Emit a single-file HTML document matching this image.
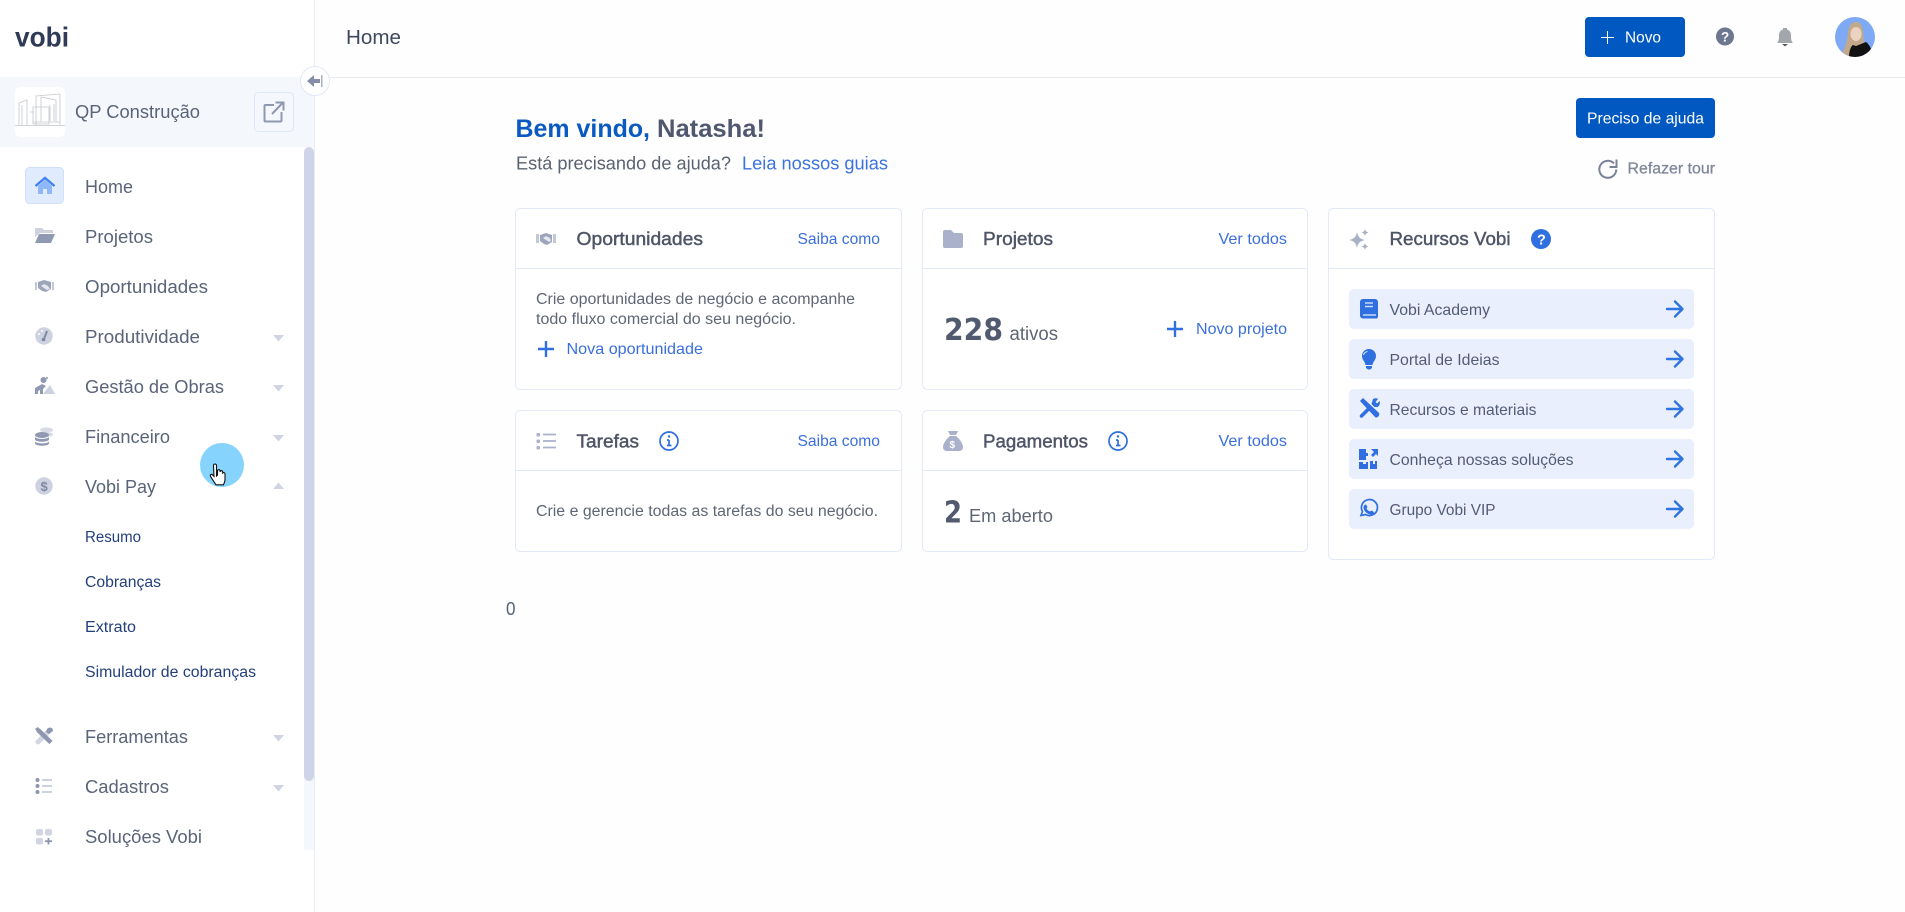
<!DOCTYPE html>
<html lang="pt-BR"><head><meta charset="utf-8"><title>Home - Vobi</title>
<style>
html,body{margin:0;padding:0;width:1905px;height:912px;overflow:hidden;background:#fefefe}
svg{display:block}
text{font-family:"Liberation Sans",Arial,sans-serif;white-space:pre}
.m{font-size:18.5px;fill:#5a6479}
.s{font-size:15.5px;fill:#23407c}
.h{font-size:18.5px;fill:#4f5567;stroke:#4f5567;stroke-width:.45}
.l{font-size:16px;fill:#3b6fdc}
.b{font-size:15.5px;fill:#5f6675}
.r{font-size:16px;fill:#525c75}
.w{font-size:16px;fill:#fff}
.c{fill:#fff;stroke:#e4e9f7;stroke-width:1}
.d{stroke:#e4e9f7;stroke-width:1}
.row{fill:#e9effc}
.a{fill:none;stroke:#2f74e0;stroke-width:2.4;stroke-linecap:round;stroke-linejoin:round}
.g{fill:#cfd3e3}
.n{font-family:"DejaVu Sans",sans-serif;font-size:30px;font-weight:700;fill:#515a6e}
</style></head><body>
<svg width="1905" height="912" viewBox="0 0 1905 912" xmlns="http://www.w3.org/2000/svg">
<rect width="1905" height="912" fill="#fefefe"/>
<rect width="314" height="912" fill="#fff"/>
<rect x="314" y="0" width="1" height="912" fill="#e9ecf6"/>
<rect x="315" y="77" width="1590" height="1" fill="#e8e9f4"/>
<text x="15" y="46.500" font-size="28" font-weight="700" fill="#2f3a55" textLength="54" lengthAdjust="spacingAndGlyphs">vobi</text>

<!-- company -->
<rect x="0" y="77" width="314" height="70" fill="#f4f7fc"/>
<rect x="15" y="87" width="50" height="50" rx="5" fill="#fff"/>
<g fill="none" stroke="#c4c7ce" stroke-width=".8">
<path d="M15 125.500H65M19 125V103l8-3v25M22 125v-20M36 125V96l24-2v31M41 122V97l15 3v22M33 107h16v17H33zM30 112h4M33 122h27M50 105v16M54 104v17"/>
</g>
<text x="75" y="118" class="m" textLength="125" lengthAdjust="spacingAndGlyphs">QP Construção</text>
<rect x="254.500" y="92.500" width="39" height="39" rx="4" fill="#f4f7fc" stroke="#dde7f8"/>
<path d="M274 105h-8.500a1 1 0 0 0-1 1v14.500a1 1 0 0 0 1 1h15a1 1 0 0 0 1-1V112M272 114l11-11.500M275.500 102.500h8v8" fill="none" stroke="#8e98b0" stroke-width="2"/>
<circle cx="315" cy="81" r="14.500" fill="#fff" stroke="#e3e8f5"/>
<path d="M307 81l7-6v4h6v4h-6v4z" fill="#858ea6"/><rect x="321" y="75" width="1.500" height="12" fill="#a9b0c2"/>

<!-- scrollbar -->
<rect x="304" y="600" width="10" height="250" fill="#f4f7fc"/>
<path d="M304 152a5 5 0 0 1 10 0V776a5 5 0 0 1-10 0z" fill="#cfd4e8"/>

<!-- menu -->
<rect x="25.500" y="167.500" width="38" height="36" rx="4" fill="#e0ebfd" stroke="#d0e0fa"/>
<path d="M38 186l7-6 7 6v8h-5v-5h-4v5h-5z" fill="#8fb6f7"/>
<path d="M35.500 186l9.500-8 9.500 8" fill="none" stroke="#3f83ef" stroke-width="2.400"/>
<text x="85" y="193" class="m" textLength="48" lengthAdjust="spacingAndGlyphs">Home</text>

<path d="M35 237v-8a1 1 0 0 1 1-1h6l2 2h9v3H40z" fill="#cdd2de"/><path d="M35 243l4-9h16l-4 9z" fill="#9099b2"/>
<text x="85" y="243" class="m" textLength="68" lengthAdjust="spacingAndGlyphs">Projetos</text>

<path d="M35 282h2v8h-2zM52 282h2v8h-2z" fill="#c3c8d6"/><path d="M38 282l6-2 7 2v7l-5 3-4-1-4-3z" fill="#9da5bb"/><path d="M41 286l3-2 4 2 2 3-3 1z" fill="#e5e8f0"/>
<text x="85" y="293" class="m" textLength="123" lengthAdjust="spacingAndGlyphs">Oportunidades</text>

<circle cx="44" cy="336" r="8.700" fill="#cdd1e0"/><path d="M47 331l-3 8" stroke="#7e88a4" stroke-width="2"/><circle cx="43.500" cy="339.500" r="1.800" fill="#7e88a4"/><circle cx="39" cy="334" r="1" fill="#fff"/><circle cx="42" cy="331" r="1" fill="#fff"/>
<text x="85" y="343" class="m" textLength="115" lengthAdjust="spacingAndGlyphs">Produtividade</text>
<path d="M273 335h11l-5.500 6.500z" class="g"/>

<circle cx="43.500" cy="380" r="3" fill="#9099b2"/><path d="M35 394v-6l7-4 4 2-3 3v5h-3v-4l-2 1v3z" fill="#9099b2"/><path d="M43 394l7-9 5 9z" fill="#cdd2e0"/><circle cx="47" cy="378" r="1" fill="#9099b2"/>
<text x="85" y="393" class="m" textLength="139" lengthAdjust="spacingAndGlyphs">Gestão de Obras</text>
<path d="M273 385h11l-5.500 6.500z" class="g"/>

<ellipse cx="46.500" cy="430" rx="6.500" ry="2.500" fill="#d8dbe6"/><ellipse cx="47" cy="434.500" rx="6" ry="2.300" fill="#d8dbe6"/>
<ellipse cx="42" cy="435" rx="7" ry="3" fill="#9099b2"/>
<path d="M35 437c2 2.500 12 2.500 14 0v2.500c-1 3-13 3-14 0zM35 441.500c2 2.500 12 2.500 14 0v2c-1 3-13 3-14 0z" fill="#9099b2"/>
<text x="85" y="443" class="m" textLength="85" lengthAdjust="spacingAndGlyphs">Financeiro</text>
<path d="M273 435h11l-5.500 6.500z" class="g"/>

<circle cx="44" cy="486" r="8.700" fill="#cdd1e0"/><text x="40.500" y="491" font-size="13" font-weight="700" fill="#8089a3">$</text>
<text x="85" y="493" class="m" textLength="71" lengthAdjust="spacingAndGlyphs">Vobi Pay</text>
<path d="M273 489h11l-5.500-6.500z" class="g"/>

<text x="85" y="542" class="s" textLength="56" lengthAdjust="spacingAndGlyphs">Resumo</text>
<text x="85" y="587" class="s" textLength="76" lengthAdjust="spacingAndGlyphs">Cobranças</text>
<text x="85" y="632" class="s" textLength="51" lengthAdjust="spacingAndGlyphs">Extrato</text>
<text x="85" y="677" class="s" textLength="171" lengthAdjust="spacingAndGlyphs">Simulador de cobranças</text>

<path d="M38 742l12-12" stroke="#d3d7e3" stroke-width="5" stroke-linecap="round"/>
<path d="M38 730l13 12.500" stroke="#8e97b0" stroke-width="4.500"/><path d="M35 729l3-2 4 5-3 2z" fill="#8e97b0"/><path d="M47 729c2-2 6-2 6 2l-4 3-3-2z" fill="#8e97b0"/>
<text x="85" y="743" class="m" textLength="103" lengthAdjust="spacingAndGlyphs">Ferramentas</text>
<path d="M273 735h11l-5.500 6.500z" class="g"/>

<circle cx="37.500" cy="780" r="2" fill="#8e97b0"/><circle cx="37.500" cy="786" r="2" fill="#8e97b0"/><circle cx="37.500" cy="792" r="2" fill="#8e97b0"/>
<path d="M42 780h10M42 786h10M42 792h10" stroke="#cdd2e0" stroke-width="2"/>
<text x="85" y="793" class="m" textLength="84" lengthAdjust="spacingAndGlyphs">Cadastros</text>
<path d="M273 785h11l-5.500 6.500z" class="g"/>

<rect x="36" y="829" width="7" height="6.500" rx="2" fill="#d1d5e2"/><rect x="45" y="829" width="7" height="6.500" rx="2" fill="#d1d5e2"/><rect x="36" y="838" width="7" height="6.500" rx="2" fill="#d1d5e2"/>
<path d="M48.500 838v6.500M45 841.200h7" stroke="#8e97b0" stroke-width="1.800"/>
<text x="85" y="843" class="m" textLength="117" lengthAdjust="spacingAndGlyphs">Soluções Vobi</text>

<!-- hover cursor -->
<circle cx="222" cy="465" r="22" fill="#86d4fe"/>
<path d="M213.500 466v-.500a1.500 1.500 0 0 1 3 0V476l1-1v-4a1.300 1.300 0 0 1 2.600 0v1a1.300 1.300 0 0 1 2.600 0v1a1.300 1.300 0 0 1 2.300.800v6c0 2-.800 3-1.500 5h-7.500l-4-6-1.500-2.500c-.800-1.500 1-2.500 2-1.500l1.500 1.500z" fill="#fff" stroke="#111" stroke-width="1.100"/>

<!-- topbar -->
<text x="346" y="44" font-size="20.500" fill="#3e4960" textLength="55" lengthAdjust="spacingAndGlyphs">Home</text>
<rect x="1585" y="17" width="100" height="40" rx="4" fill="#0058c0"/>
<path d="M1607.500 31v13M1601 37.500h13" stroke="#fff" stroke-width="1"/>
<text x="1625" y="42.500" class="w" font-size="16.500" textLength="36" lengthAdjust="spacingAndGlyphs">Novo</text>
<circle cx="1725" cy="36.500" r="9" fill="#6d7790"/>
<text x="1721" y="41.500" font-size="13.500" font-weight="700" fill="#fff">?</text>
<path d="M1777 43c2-2 2-4 2-8 0-3 2-5 4-5.500v-1.500h4v1.500c2 .5 4 2.500 4 5.500 0 4 0 6 2 8z" fill="#a3a6ab"/><path d="M1782 44h6l-3 2.500z" fill="#55585e"/>
<clipPath id="av"><circle cx="1855" cy="37" r="20"/></clipPath>
<g clip-path="url(#av)">
<rect x="1835" y="17" width="40" height="40" fill="#7ea9f5"/>
<path d="M1841 56c3-6 6-13 7-24 1-7 4-10 8-10s6 3 7 9l1 14-12 12z" fill="#c3a98b"/>
<ellipse cx="1856" cy="34" rx="5.500" ry="7" fill="#ecd3bf"/>
<path d="M1849 57c0-6 2-11 4-12l3 1 10-4c3 2 6 7 7 15z" fill="#111"/>
</g>

<!-- greeting -->
<text x="515.500" y="137" font-size="25" font-weight="700" fill="#0b5ac2" textLength="134.500" lengthAdjust="spacingAndGlyphs">Bem vindo,</text>
<text x="657" y="137" font-size="25" font-weight="700" fill="#4f586e" textLength="108" lengthAdjust="spacingAndGlyphs">Natasha!</text>
<text x="516" y="169.500" font-size="18" fill="#5a6272" textLength="215" lengthAdjust="spacingAndGlyphs">Está precisando de ajuda?</text>
<text x="742" y="169.500" font-size="18" fill="#3b73df" textLength="146" lengthAdjust="spacingAndGlyphs">Leia nossos guias</text>
<rect x="1576" y="98" width="139" height="40" rx="4" fill="#0058c0"/>
<text x="1587" y="123.500" class="w" textLength="117" lengthAdjust="spacingAndGlyphs">Preciso de ajuda</text>
<path d="M1614 163.500a8.500 8.500 0 1 0 2.300 6" fill="none" stroke="#7a8299" stroke-width="2"/><path d="M1616.500 159.500v7.500h-7" fill="none" stroke="#7a8299" stroke-width="2"/>
<text x="1627.500" y="173.500" font-size="15.500" fill="#7f869a" stroke="#7f869a" stroke-width=".25" textLength="87.500" lengthAdjust="spacingAndGlyphs">Refazer tour</text>

<!-- card oportunidades -->
<rect x="515.500" y="208.500" width="386" height="181" rx="5" class="c"/>
<path d="M515.500 268.500H901.500" class="d"/>
<path d="M536 234h3v9h-3zM553 234h3v9h-3z" fill="#c3c8d6"/><path d="M540 235l6-2 6 2v7l-5 3-3-1-4-3z" fill="#9da5bb"/><path d="M543 238l3-2 4 2 1 3-2 1z" fill="#e5e8f0"/>
<text x="576.500" y="245" class="h" textLength="126.500" lengthAdjust="spacingAndGlyphs">Oportunidades</text>
<text x="797.500" y="244" class="l" textLength="82.500" lengthAdjust="spacingAndGlyphs">Saiba como</text>
<text x="536" y="304" class="b" textLength="319" lengthAdjust="spacingAndGlyphs">Crie oportunidades de negócio e acompanhe</text>
<text x="536" y="324" class="b" textLength="260" lengthAdjust="spacingAndGlyphs">todo fluxo comercial do seu negócio.</text>
<path d="M546 341v16M538 349h16" stroke="#2f6fdf" stroke-width="2.400"/>
<text x="566.500" y="354" class="l" textLength="136.500" lengthAdjust="spacingAndGlyphs">Nova oportunidade</text>

<!-- card projetos -->
<rect x="922.500" y="208.500" width="385" height="181" rx="5" class="c"/>
<path d="M922.500 268.500H1307.500" class="d"/>
<path d="M943 232a2 2 0 0 1 2-2h6l3 3h7a2 2 0 0 1 2 2v11a2 2 0 0 1-2 2h-16a2 2 0 0 1-2-2z" fill="#a9b1cb"/>
<text x="983" y="245" class="h" textLength="70" lengthAdjust="spacingAndGlyphs">Projetos</text>
<text x="1218.500" y="244" class="l" textLength="68.500" lengthAdjust="spacingAndGlyphs">Ver todos</text>
<text x="944" y="340" class="n" textLength="59" lengthAdjust="spacingAndGlyphs">228</text>
<text x="1009.500" y="340" font-size="19" fill="#5f6675" textLength="48.500" lengthAdjust="spacingAndGlyphs">ativos</text>
<path d="M1175 321v16M1167 329h16" stroke="#2f6fdf" stroke-width="2.400"/>
<text x="1196" y="334" class="l" textLength="91" lengthAdjust="spacingAndGlyphs">Novo projeto</text>

<!-- card tarefas -->
<rect x="515.500" y="410.500" width="386" height="141" rx="5" class="c"/>
<path d="M515.500 470.500H901.500" class="d"/>
<rect x="536.500" y="433" width="3.500" height="3.500" rx="1" fill="#a9b1cb"/><rect x="536.500" y="439.500" width="3.500" height="3.500" rx="1" fill="#a9b1cb"/><rect x="536.500" y="446" width="3.500" height="3.500" rx="1" fill="#a9b1cb"/>
<path d="M543 434.500h13M543 441h13M543 447.500h13" stroke="#a9b1cb" stroke-width="1.800"/>
<text x="576.500" y="447.500" class="h" textLength="62.500" lengthAdjust="spacingAndGlyphs">Tarefas</text>
<circle cx="669" cy="441" r="9" fill="none" stroke="#2f6fdf" stroke-width="1.700"/>
<path d="M669 440v5M667 440h2M667 445.500h4.500" stroke="#2f6fdf" stroke-width="1.700"/><circle cx="669" cy="436.500" r="1.200" fill="#2f6fdf"/>
<text x="797.500" y="446" class="l" textLength="82.500" lengthAdjust="spacingAndGlyphs">Saiba como</text>
<text x="536" y="516" class="b" textLength="342" lengthAdjust="spacingAndGlyphs">Crie e gerencie todas as tarefas do seu negócio.</text>

<!-- card pagamentos -->
<rect x="922.500" y="410.500" width="385" height="141" rx="5" class="c"/>
<path d="M922.500 470.500H1307.500" class="d"/>
<path d="M948 431h10l-2 4h-6zM950 436h6c4 3 7 8 7 11 0 3-2 4-4 4h-12c-2 0-4-1-4-4 0-3 3-8 7-11z" fill="#a9b1cb"/>
<text x="949.500" y="448" font-size="10" font-weight="700" fill="#fff">$</text>
<text x="983" y="447.500" class="h" textLength="105" lengthAdjust="spacingAndGlyphs">Pagamentos</text>
<circle cx="1118" cy="441" r="9" fill="none" stroke="#2f6fdf" stroke-width="1.700"/>
<path d="M1118 440v5M1116 440h2M1116 445.500h4.500" stroke="#2f6fdf" stroke-width="1.700"/><circle cx="1118" cy="436.500" r="1.200" fill="#2f6fdf"/>
<text x="1218.500" y="446" class="l" textLength="68.500" lengthAdjust="spacingAndGlyphs">Ver todos</text>
<text x="944" y="522.500" class="n" textLength="18" lengthAdjust="spacingAndGlyphs">2</text>
<text x="969" y="522" font-size="18" fill="#5f6675" textLength="84" lengthAdjust="spacingAndGlyphs">Em aberto</text>

<text x="506" y="615" font-size="18" fill="#566178" textLength="9.500" lengthAdjust="spacingAndGlyphs">0</text>

<!-- card recursos -->
<rect x="1328.500" y="208.500" width="386" height="351" rx="5" class="c"/>
<path d="M1328.500 268.500H1714.500" class="d"/>
<path d="M1357 232c1 5 3 7 8 8-5 1-7 3-8 8-1-5-3-7-8-8 5-1 7-3 8-8zM1365 229c.5 2 1.500 3 3.500 3.500-2 .5-3 1.500-3.500 3.500-.5-2-1.500-3-3.500-3.500 2-.5 3-1.500 3.500-3.500zM1365 243c.5 2 1.500 3 3.500 3.500-2 .5-3 1.500-3.500 3.500-.5-2-1.500-3-3.500-3.500 2-.5 3-1.500 3.500-3.500z" fill="#a9b1c6"/>
<text x="1389.500" y="245" class="h" textLength="121" lengthAdjust="spacingAndGlyphs">Recursos Vobi</text>
<circle cx="1541" cy="239" r="10" fill="#2f6fdf"/><text x="1537" y="244.500" font-size="14.500" font-weight="700" fill="#fff">?</text>

<rect x="1349" y="289" width="345" height="40" rx="5" class="row"/>
<rect x="1349" y="339" width="345" height="40" rx="5" class="row"/>
<rect x="1349" y="389" width="345" height="40" rx="5" class="row"/>
<rect x="1349" y="439" width="345" height="40" rx="5" class="row"/>
<rect x="1349" y="489" width="345" height="40" rx="5" class="row"/>

<path d="M1360 302a3 3 0 0 1 3-3h12a3 3 0 0 1 3 3v15l-1 1.500h-14a3 3 0 0 1-3-3z" fill="#2f6fdf"/><path d="M1365 303h8M1365 306.500h8M1363 315h13" stroke="#c9dafa" stroke-width="1.500"/>
<path d="M1369 349c4 0 7 3 7 7 0 3-2 5-3 7l-.5 2h-7l-.5-2c-1-2-3-4-3-7 0-4 3-7 7-7zM1366 366h6v2l-2 1.500h-2l-2-1.500z" fill="#2f6fdf"/><path d="M1363.500 355a5 5 0 0 1 4-3.500" stroke="#dce7fb" fill="none"/>
<path d="M1360 401l3-3 16 15c1 2-1 5-3.500 4.500z" fill="#2f6fdf"/>
<path d="M1360 415l10-10 2.500 2.500-10 10c-2 1-3.500-1-2.500-2.500z" fill="#2f6fdf"/><path d="M1373 399c2-1 4-1 5 0l-2.500 3 1.500 1.500 2.500-2.500c1 2 0 5-2 6l-3 0-3-3z" fill="#2f6fdf"/>
<path d="M1359 449h7v4h2v3h-2v4h-7zM1371 449h7v7l-2-2-3 3-2-2 3-3zM1359 462h4v2h3v-2h2v7h-9zM1370 461h3v3h2v-3h2v8h-7z" fill="#2f6fdf"/>
<path d="M1361 516l1.500-4a8 8 0 1 1 3 3z" transform="translate(0 -.5)" fill="none" stroke="#2f6fdf" stroke-width="1.700"/><path d="M1366 504.500l1.500 2.500-1 1.500c.8 1.500 2 2.500 3.500 3l1.500-1 2.500 1.500c0 2-2 2.500-3 2.500-4 0-7.500-4-7.500-7 0-1.500 1-3 2.500-3z" fill="#2f6fdf"/>

<text x="1389.500" y="315" class="r" textLength="100.500" lengthAdjust="spacingAndGlyphs">Vobi Academy</text>
<text x="1389.500" y="365" class="r" textLength="110" lengthAdjust="spacingAndGlyphs">Portal de Ideias</text>
<text x="1389.500" y="415" class="r" textLength="147" lengthAdjust="spacingAndGlyphs">Recursos e materiais</text>
<text x="1389.500" y="465" class="r" textLength="184" lengthAdjust="spacingAndGlyphs">Conheça nossas soluções</text>
<text x="1389.500" y="515" class="r" textLength="106" lengthAdjust="spacingAndGlyphs">Grupo Vobi VIP</text>

<path d="M1667 309h15M1675 301.500l7.500 7.500-7.500 7.500" class="a"/>
<path d="M1667 359h15M1675 351.500l7.500 7.500-7.500 7.500" class="a"/>
<path d="M1667 409h15M1675 401.500l7.500 7.500-7.500 7.500" class="a"/>
<path d="M1667 459h15M1675 451.500l7.500 7.500-7.500 7.500" class="a"/>
<path d="M1667 509h15M1675 501.500l7.500 7.500-7.500 7.500" class="a"/>
</svg>
</body></html>
